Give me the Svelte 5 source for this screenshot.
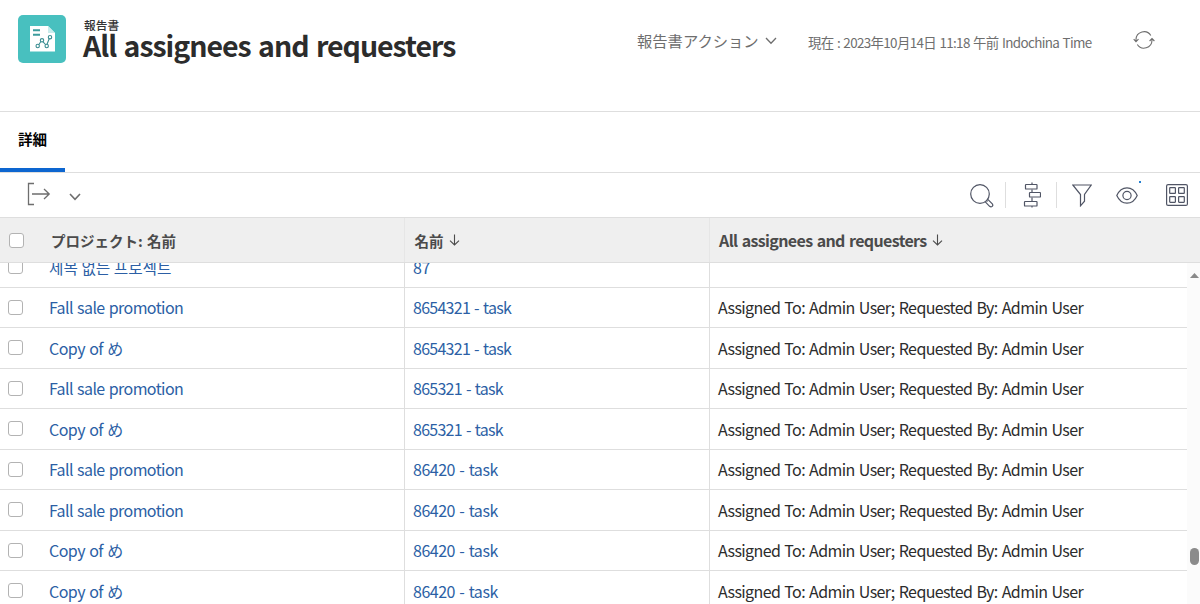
<script>
  const assigned = 'Assigned To: Admin User; Requested By: Admin User';
  const rows = [
    { project: '제목 없는 프로젝트', name: '87', detail: '', lang: 'ko' },
    { project: 'Fall sale promotion', name: '8654321 - task', detail: assigned },
    { project: 'Copy of め', name: '8654321 - task', detail: assigned },
    { project: 'Fall sale promotion', name: '865321 - task', detail: assigned },
    { project: 'Copy of め', name: '865321 - task', detail: assigned },
    { project: 'Fall sale promotion', name: '86420 - task', detail: assigned },
    { project: 'Fall sale promotion', name: '86420 - task', detail: assigned },
    { project: 'Copy of め', name: '86420 - task', detail: assigned },
    { project: 'Copy of め', name: '86420 - task', detail: assigned }
  ];
</script>

{#snippet arrow()}
  <svg class="sort" width="11" height="12" viewBox="0 0 11 12"><path d="M5.5 .5v10.5M1 6.7l4.5 4.3L10 6.7" /></svg>
{/snippet}

<div class="page">
  <header>
    <svg class="logo" width="48" height="48" viewBox="0 0 48 48">
      <rect width="48" height="48" rx="5" fill="#48c0bf" />
      <path d="M12 11h18l7 7v18.500H12z" fill="#fff" />
      <path d="M30 11v7h7z" fill="#c8ecec" />
      <path d="M15 15.200h7M15 19.800h7" stroke="#3d9c9d" stroke-width="2" />
      <g fill="#fff" stroke="#3b8e92" stroke-width="1.100">
        <path d="M20.200 30.500l3.500-5.200 4.800 5.200 3.300-8.200" fill="none" />
        <circle cx="19.700" cy="31" r="1.700" /><circle cx="24" cy="25.300" r="1.700" />
        <circle cx="28.700" cy="31" r="1.700" /><circle cx="32" cy="22.200" r="1.700" />
      </g>
    </svg>
    <div class="titles">
      <span class="kind">報告書</span>
      <h1>All assignees and requesters</h1>
    </div>
    <div class="actions">
      <span>報告書アクション</span>
      <svg width="12" height="8" viewBox="0 0 12 8"><path d="M1 1l5 5.300L11 1" /></svg>
    </div>
    <span class="time">現在 : 2023年10月14日 11:18 午前 Indochina Time</span>
    <svg class="refresh" width="22" height="20" viewBox="0 0 22 20">
      <path d="M3 10.800V9.500A8 8 0 0 1 17.800 5.500M19 9v1.300A8 8 0 0 1 4.300 14.500M.7 9.200L3 11.600l2.500-2.400M16.600 11L19 8.600l2.400 2.400" />
    </svg>
  </header>

  <nav><span class="tab">詳細</span></nav>

  <div class="toolbar">
    <svg class="export" width="24" height="24" viewBox="0 0 24 24"><path d="M7 1.500H1.500v21H7M5 12h17.200M17 7l5.200 5-5.200 5" /></svg>
    <svg class="chev" width="12" height="8" viewBox="0 0 12 8"><path d="M1 1l5 5.300L11 1" /></svg>
    <div class="tools">
      <svg class="search" width="24" height="24" viewBox="0 0 24 24">
        <circle cx="10" cy="10" r="9.300" />
        <path d="M15.300 17.900l4.300 4.400c1.800 1.500 4.200-.5 2.700-2.500l-4.500-4.400M16.700 16.700l.8.800" />
      </svg>
      <i></i>
      <svg class="group" width="18" height="26" viewBox="0 0 18 26">
        <path d="M9 .5V3M9 7.500v3M9 15.500v4M9 24v1.500" />
        <rect x="2.500" y="2.500" width="11.500" height="4.500" rx=".6" /><rect x="6.500" y="10.500" width="11" height="4.500" rx=".6" /><rect x="1.500" y="19.500" width="12.500" height="4.500" rx=".6" />
      </svg>
      <i></i>
      <svg class="filter" width="20" height="23" viewBox="0 0 20 23"><path d="M.8 1h18.400l-6.700 9.500v6.700L8.500 21.800V10.500z" /></svg>
      <div class="eye">
        <svg width="22" height="17" viewBox="0 0 22 17"><path d="M.8 8.500C3 3.600 6.700.8 11 .8s8 2.800 10.200 7.700C19 13.400 15.300 16.200 11 16.200S3 13.400.8 8.500z" /><circle cx="11" cy="8.500" r="4.100" /></svg>
        <b></b>
      </div>
      <svg class="grid" width="22" height="22" viewBox="0 0 22 22">
        <rect x=".6" y=".6" width="20.800" height="20.800" rx="1.500" />
        <rect x="3.700" y="3.700" width="5.700" height="5.700" rx=".5" /><rect x="12.600" y="3.700" width="5.700" height="5.700" rx=".5" />
        <rect x="3.700" y="12.600" width="5.700" height="5.700" rx=".5" /><rect x="12.600" y="12.600" width="5.700" height="5.700" rx=".5" />
      </svg>
    </div>
  </div>

  <div class="head">
    <div class="c0"><span class="box"></span></div>
    <div class="c1">プロジェクト: 名前</div>
    <div class="c2">名前{@render arrow()}</div>
    <div class="c3"><span class="en">All assignees and requesters</span>{@render arrow()}</div>
  </div>

  <div class="body">
    <div class="rows">
      {#each rows as r}
        <div class="row">
          <div class="c0"><span class="box"></span></div>
          <div class="c1 link" class:ko={r.lang === 'ko'} class:copy={r.project.startsWith('Copy')}>{r.project}</div>
          <div class="c2 link" class:long={r.name.length > 12}>{r.name}</div>
          <div class="c3 detail">{r.detail}</div>
        </div>
      {/each}
    </div>
    <div class="scroll">
      <svg width="9" height="5" viewBox="0 0 9 5"><path d="M0 5L4.500 0 9 5z" /></svg>
      <span class="thumb"></span>
    </div>
  </div>
</div>

<style>
  :global(body) { background: #fff; overflow: hidden; }
  .page {
    width: 1200px; height: 604px; overflow: hidden; display: flex; flex-direction: column;
    font-family: "Noto Sans CJK JP", sans-serif; color: #2c2c2c; white-space: nowrap;
  }
  .page * { box-sizing: border-box; }
  svg { display: block; flex: none; fill: none; stroke: #6e6e6e; stroke-width: 1.300; }
  .logo { stroke: none; margin: 15px 0 0 18px; }
  header { height: 112px; flex: none; display: flex; align-items: flex-start; border-bottom: 1px solid #dedede; }
  .titles { width: 554px; margin: 18px 0 0 17px; display: flex; flex-direction: column; }
  .kind { padding-left: 1px; font-size: 11.700px; line-height: 14px; font-weight: 500; color: #333; }
  h1 { margin: 0; font-size: 28.500px; line-height: 26px; font-weight: 700; letter-spacing: -1.020px; word-spacing: 2px; }
  .actions { width: 171px; display: flex; gap: 6px; margin-top: 29px; font-size: 15.300px; line-height: 22px; color: #6e6e6e; }
  .actions svg { margin-top: 8px; }
  .time { width: 326px; margin-top: 32px; font-size: 13.400px; line-height: 20px; color: #6e6e6e; letter-spacing: -.63px; word-spacing: 1px; }
  .refresh { margin-top: 30px; stroke-width: 1.100; margin-left: -1px; }
  nav { height: 61px; flex: none; display: flex; border-bottom: 1px solid #dedede; }
  .tab { width: 65px; padding-left: 18px; border-bottom: 4px solid #0d66d0; font-size: 14.500px; line-height: 54px; font-weight: 700; color: #000; }
  .toolbar { height: 45px; flex: none; display: flex; border-bottom: 1px solid #dedede; }
  .export { margin: 9px 0 0 27px; }
  .chev { margin: 20px 0 0 18px; stroke-width: 1.600; }
  .tools { margin-left: auto; display: flex; }
  .tools svg { stroke: #505565; stroke-width: 1.200; }
  .tools i { width: 1px; height: 26px; margin-top: 9px; background: #dedede; }
  .search { margin: 11px 11px 0 0; }
  .group { margin: 9px 15px 0 17px; }
  .filter { margin: 11px 0 0 15px; }
  .eye { position: relative; margin: 14px 28px 0 24px; }
  .eye b { position: absolute; right: -3px; top: -6px; width: 2px; height: 2px; background: #2680d0; }
  .grid { margin: 11px 12px 0 0; }
  .head { height: 45px; flex: none; display: flex; background: #efefef; border-bottom: 1px solid #dedede; font-weight: 700; font-size: 14.500px; line-height: 46px; color: #4b4b4b; }
  .c0 { width: 42px; flex: none; padding-left: 8px; }
  .c1 { width: 363px; flex: none; padding-left: 7px; border-right: 1px solid #dedede; }
  .c2 { width: 305px; flex: none; padding-left: 8px; border-right: 1px solid #dedede; }
  .c3 { flex: 1; padding-left: 8px; }
  .head > div { border-right-color: #e6e6e6; display: flex; }
  .head .c0 { padding-left: 9px; }
  .head .c1 { padding-left: 9px; word-spacing: 1px; }
  .head .c2 { padding-left: 9.500px; }
  .head .c3 { padding-left: 9px; }
  .sort { margin: 16px 0 0 5px; stroke: #4b4b4b; stroke-width: 1.100; }
  .en { font-size: 16px; line-height: 44px; letter-spacing: -.63px; word-spacing: 1.200px; }
  .box { display: block; width: 15px; height: 15px; margin-top: 12px; border: 1px solid #b3b3b3; border-radius: 3px; background: #fff; }
  .head .box { margin-top: 15px; }
  .body { flex: 1; min-height: 0; overflow: hidden; display: flex; }
  .rows { flex: 1; margin-top: -16px; }
  .row { display: flex; height: 41px; border-bottom: 1px solid #dedede; font-size: 16px; line-height: 41px; }
  .row:nth-child(even) { height: 40px; line-height: 39px; }
  .link { color: #2c5fa5; letter-spacing: -.6px; word-spacing: 1.200px; }
  .c2.link { letter-spacing: -.48px; }
  .c2.long { letter-spacing: -.73px; }
  .copy { letter-spacing: -.54px; }
  .detail { letter-spacing: -.6px; word-spacing: 1.050px; }
  .ko { font-family: "Noto Sans CJK KR", sans-serif; font-size: 15.700px; letter-spacing: 0; word-spacing: 0; }
  .scroll { width: 13px; background: #fbfbfb; display: flex; flex-direction: column; align-items: flex-end; padding-right: 1px; }
  .scroll svg { margin: 10px 0 0; fill: #8a8a8a; stroke: none; }
  .thumb { width: 9px; height: 17px; margin-top: 270px; border-radius: 5px; background: #8b8b8b; }
</style>
